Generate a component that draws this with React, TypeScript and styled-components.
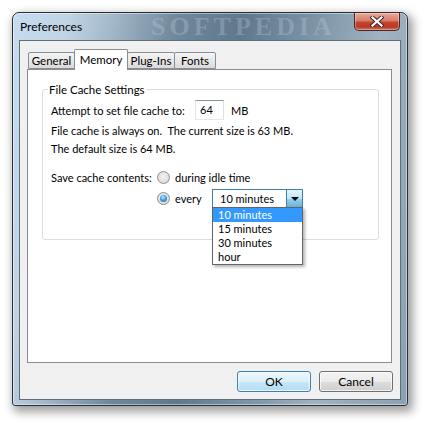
import React from 'react';
import styled, { createGlobalStyle } from 'styled-components';

const Global = createGlobalStyle`
  html, body { margin: 0; padding: 0; background: #ffffff; }
  body { font-family: Lato, "Liberation Sans", sans-serif; font-size: 11px; color: #000; }
  * { box-sizing: border-box; }
`;

const Page = styled.div`
  width: 427px;
  height: 427px;
  padding: 12px 0 0 12px;
  overflow: hidden;
`;

const Window = styled.div`
  width: 396px;
  height: 394px;
  border: 1px solid #25303a;
  border-radius: 7px 7px 3px 3px;
  background: linear-gradient(100deg, #c6dcef 0%, #c0d4e4 12%, #a2b7c8 22%, #6f879a 36%, #5f788c 50%, #7d95a7 66%, #9fb3c1 80%, #8aa0b0 100%);
  box-shadow: inset 0 0 0 1px rgba(255, 255, 255, 0.45), 3px 4px 10px 2px rgba(0, 0, 0, 0.38);
  padding: 0 6px 5px 6px;
  display: flex;
  flex-direction: column;
`;

const TitleBar = styled.div`
  height: 27px;
  display: flex;
  align-items: flex-start;
  position: relative;
  flex: none;
`;

const Title = styled.div`
  flex: 1;
  padding-left: 1px;
  line-height: 28px;
  font-size: 12px;
  color: #000;
  position: relative;
  z-index: 1;
`;

const Watermark = styled.div`
  position: absolute;
  left: 132px;
  top: 0;
  font-family: "Liberation Serif", serif;
  font-weight: bold;
  font-size: 26px;
  line-height: 27px;
  letter-spacing: 4px;
  color: rgba(200, 215, 228, 0.28);
  pointer-events: none;
`;

const CloseButton = styled.div`
  width: 46px;
  height: 19px;
  margin-top: -1px;
  margin-right: 1px;
  border: 1px solid #4b2520;
  border-top-color: #3a2a28;
  border-radius: 0 0 5px 5px;
  background: linear-gradient(#e8a99c 0%, #d77c6a 45%, #c4452f 55%, #b83a22 80%, #d0705a 100%);
  box-shadow: inset 0 0 0 1px rgba(255, 255, 255, 0.35);
  display: flex;
  align-items: center;
  justify-content: center;
  position: relative;
  z-index: 1;
`;

const Client = styled.div`
  flex: 1;
  border: 1px solid #5f6e7b;
  background: #f0f0f0;
  padding: 8px 8px 0 7px;
  display: flex;
  flex-direction: column;
`;

const TabStrip = styled.div`
  display: flex;
  align-items: flex-end;
  padding-left: 1px;
  height: 20px;
  position: relative;
  z-index: 2;
`;

const Tab = styled.div<{ $active?: boolean; $w: number }>`
  width: ${p => p.$w}px;
  height: ${p => (p.$active ? 21 : 17)}px;
  margin-left: -1px;
  margin-bottom: ${p => (p.$active ? -1 : 0)}px;
  border: 1px solid #898c95;
  border-bottom: ${p => (p.$active ? 'none' : '1px solid #898c95')};
  border-radius: 2px 2px 0 0;
  background: ${p => (p.$active ? '#ffffff' : 'linear-gradient(#f5f5f5, #e6e6e6 55%, #dadada)')};
  display: flex;
  align-items: ${p => (p.$active ? 'flex-start' : 'center')};
  padding-top: ${p => (p.$active ? 2 : 0)}px;
  justify-content: center;
  font-size: 11.5px;
  line-height: 15px;
  position: relative;
  z-index: ${p => (p.$active ? 2 : 1)};
  &:first-child { margin-left: 0; }
`;

const Panel = styled.div`
  height: 294px;
  border: 1px solid #898c95;
  background: #ffffff;
  padding: 12px 12px 0 14px;
`;

const Group = styled.fieldset`
  margin: 0;
  height: 158px;
  border: 1px solid #d5dfe5;
  border-radius: 3px;
  padding: 0 8px;
  display: block;
`;

const Legend = styled.legend`
  padding: 0 1px;
  margin-left: -3px;
  font-size: 11.5px;
  line-height: 15px;
  color: #000;
`;

const Row = styled.div<{ $mt: number }>`
  display: flex;
  align-items: center;
  margin-top: ${p => p.$mt}px;
  line-height: 15px;
  min-height: 15px;
`;

const Label = styled.span<{ $w?: number }>`
  min-width: ${p => (p.$w ? `${p.$w}px` : 'auto')};
  white-space: nowrap;
`;

const NumberBox = styled.div`
  width: 29px;
  height: 20px;
  border: 1px solid #abadb3;
  border-top-color: #8e8f8f;
  border-left-color: #e2e3ea;
  border-right-color: #dbdfe6;
  border-bottom-color: #e3e9ef;
  background: #fff;
  padding-left: 4px;
  line-height: 18px;
`;

const Unit = styled.span`
  margin-left: 7px;
`;

const Indent = styled.div`
  width: 106px;
  flex: none;
`;

const RadioWrap = styled.label<{ $w?: number }>`
  display: flex;
  align-items: center;
  width: ${p => (p.$w ? `${p.$w}px` : 'auto')};
  flex: none;
  white-space: nowrap;
`;

const RadioDot = styled.span<{ $checked?: boolean }>`
  width: 13px;
  height: 13px;
  border-radius: 50%;
  border: 1px solid #8e8f8f;
  background: radial-gradient(circle at 50% 45%, #f4f4f4 0%, #e2e2e2 55%, #cfcfcf 100%);
  display: inline-flex;
  align-items: center;
  justify-content: center;
  margin-right: 5px;
  flex: none;
  &::after {
    content: '';
    width: 7px;
    height: 7px;
    border-radius: 50%;
    display: ${p => (p.$checked ? 'block' : 'none')};
    background: radial-gradient(circle at 45% 35%, #b8ecff 0%, #46a4dc 45%, #1b5c92 100%);
  }
`;

const Combo = styled.div`
  width: 91px;
  height: 19px;
  border: 1px solid #3c7fb1;
  background: #fff;
  display: flex;
  position: relative;
`;

const ComboText = styled.div`
  flex: 1;
  padding-left: 7px;
  line-height: 17px;
`;

const ComboButton = styled.div`
  width: 16px;
  border-left: 1px solid #3c7fb1;
  background: linear-gradient(#e5f4fc 0%, #c4e5f6 50%, #98d1ef 51%, #68b3db 100%);
  display: flex;
  align-items: center;
  justify-content: center;
`;

const Arrow = styled.span`
  width: 0;
  height: 0;
  border-left: 4px solid transparent;
  border-right: 4px solid transparent;
  border-top: 4px solid #000;
`;

const DropList = styled.div`
  position: absolute;
  left: -1px;
  top: calc(100% - 0px);
  width: 91px;
  border: 1px solid #646464;
  background: #fff;
  box-shadow: 2px 2px 3px rgba(0, 0, 0, 0.3);
  z-index: 5;
`;

const Item = styled.div<{ $sel?: boolean }>`
  height: 14px;
  line-height: 14px;
  padding-left: 5px;
  background: ${p => (p.$sel ? '#3399ff' : 'transparent')};
  color: ${p => (p.$sel ? '#ffffff' : '#000000')};
`;

const ButtonRow = styled.div`
  display: flex;
  justify-content: flex-end;
  gap: 8px;
  margin-top: 8px;
  margin-right: -1px;
`;

const Button = styled.div<{ $default?: boolean }>`
  width: 74px;
  height: 21px;
  border: 1px solid ${p => (p.$default ? '#3c7fb1' : '#707070')};
  border-radius: 3px;
  background: ${p =>
    p.$default
      ? 'linear-gradient(#ebf6fc 0%, #dcf0fa 50%, #c5e6f7 51%, #b6dcf1 100%)'
      : 'linear-gradient(#f2f2f2 0%, #ebebeb 50%, #dddddd 51%, #cfcfcf 100%)'};
  box-shadow: inset 0 0 0 1px rgba(255, 255, 255, 0.7);
  display: flex;
  align-items: center;
  justify-content: center;
  font-size: 12px;
`;

const CloseIcon = () => (
  <svg width="14" height="11" viewBox="0 0 14 11">
    <path d="M2.5 1.5 L11.5 9.5 M11.5 1.5 L2.5 9.5" stroke="#3b2320" strokeWidth="4" strokeLinecap="square" fill="none" />
    <path d="M2.5 1.5 L11.5 9.5 M11.5 1.5 L2.5 9.5" stroke="#ffffff" strokeWidth="2.2" strokeLinecap="square" fill="none" />
  </svg>
);

export default function App() {
  return (
    <Page>
      <Global />
      <Window>
        <TitleBar>
          <Watermark>SOFTPEDIA</Watermark>
          <Title>Preferences</Title>
          <CloseButton>
            <CloseIcon />
          </CloseButton>
        </TitleBar>
        <Client>
          <TabStrip>
            <Tab $w={47}>General</Tab>
            <Tab $w={54} $active>Memory</Tab>
            <Tab $w={48}>Plug-Ins</Tab>
            <Tab $w={42}>Fonts</Tab>
          </TabStrip>
          <Panel>
            <Group>
              <Legend>File Cache Settings</Legend>
              <Row $mt={3}>
                <Label $w={144}>Attempt to set file cache to:</Label>
                <NumberBox>64</NumberBox>
                <Unit>MB</Unit>
              </Row>
              <Row $mt={3}>
                <Label>File cache is always on.&nbsp; The current size is 63 MB.</Label>
              </Row>
              <Row $mt={3}>
                <Label>The default size is 64 MB.</Label>
              </Row>
              <Row $mt={14}>
                <Label $w={106}>Save cache contents:</Label>
                <RadioWrap>
                  <RadioDot />
                  during idle time
                </RadioWrap>
              </Row>
              <Row $mt={4}>
                <Indent />
                <RadioWrap $w={55}>
                  <RadioDot $checked />
                  every
                </RadioWrap>
                <Combo>
                  <ComboText>10 minutes</ComboText>
                  <ComboButton>
                    <Arrow />
                  </ComboButton>
                  <DropList>
                    <Item $sel>10 minutes</Item>
                    <Item>15 minutes</Item>
                    <Item>30 minutes</Item>
                    <Item>hour</Item>
                  </DropList>
                </Combo>
              </Row>
            </Group>
          </Panel>
          <ButtonRow>
            <Button $default>OK</Button>
            <Button>Cancel</Button>
          </ButtonRow>
        </Client>
      </Window>
    </Page>
  );
}
